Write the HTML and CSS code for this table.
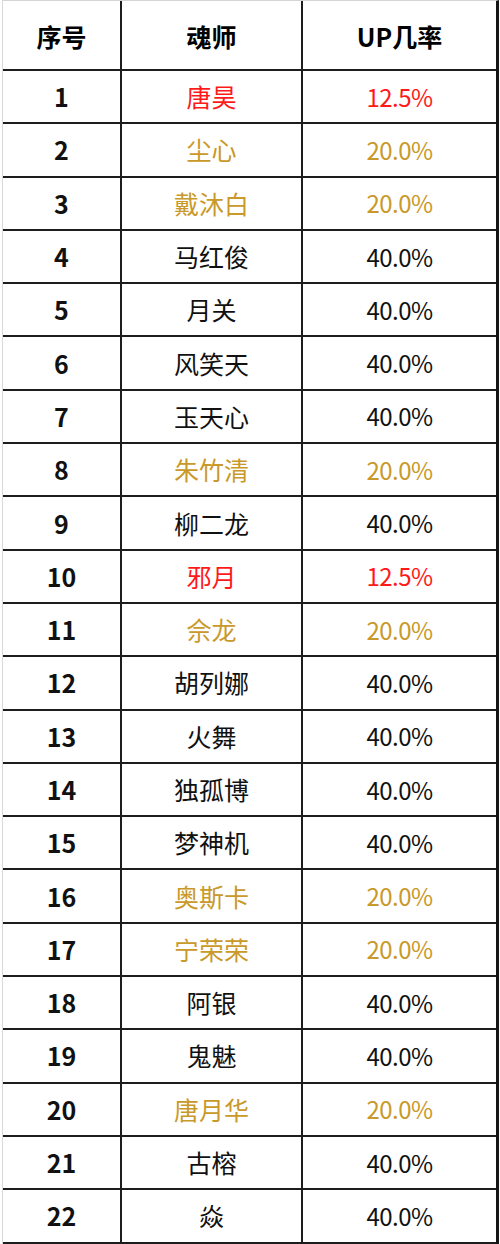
FILE: index.html
```html
<!DOCTYPE html>
<html lang="zh">
<head>
<meta charset="utf-8">
<link rel="stylesheet" href="styles.css">
</head>
<body>
<div class="sheet">
  <div class="row head"><div class="c c1">序号</div><div class="c c2">魂师</div><div class="c c3">UP几率</div></div>
  <div class="row red"><div class="c c1">1</div><div class="c c2">唐昊</div><div class="c c3">12.5%</div></div>
  <div class="row gold"><div class="c c1">2</div><div class="c c2">尘心</div><div class="c c3">20.0%</div></div>
  <div class="row gold"><div class="c c1">3</div><div class="c c2">戴沐白</div><div class="c c3">20.0%</div></div>
  <div class="row"><div class="c c1">4</div><div class="c c2">马红俊</div><div class="c c3">40.0%</div></div>
  <div class="row"><div class="c c1">5</div><div class="c c2">月关</div><div class="c c3">40.0%</div></div>
  <div class="row"><div class="c c1">6</div><div class="c c2">风笑天</div><div class="c c3">40.0%</div></div>
  <div class="row"><div class="c c1">7</div><div class="c c2">玉天心</div><div class="c c3">40.0%</div></div>
  <div class="row gold"><div class="c c1">8</div><div class="c c2">朱竹清</div><div class="c c3">20.0%</div></div>
  <div class="row"><div class="c c1">9</div><div class="c c2">柳二龙</div><div class="c c3">40.0%</div></div>
  <div class="row red"><div class="c c1">10</div><div class="c c2">邪月</div><div class="c c3">12.5%</div></div>
  <div class="row gold"><div class="c c1">11</div><div class="c c2">佘龙</div><div class="c c3">20.0%</div></div>
  <div class="row"><div class="c c1">12</div><div class="c c2">胡列娜</div><div class="c c3">40.0%</div></div>
  <div class="row"><div class="c c1">13</div><div class="c c2">火舞</div><div class="c c3">40.0%</div></div>
  <div class="row"><div class="c c1">14</div><div class="c c2">独孤博</div><div class="c c3">40.0%</div></div>
  <div class="row"><div class="c c1">15</div><div class="c c2">梦神机</div><div class="c c3">40.0%</div></div>
  <div class="row gold"><div class="c c1">16</div><div class="c c2">奥斯卡</div><div class="c c3">20.0%</div></div>
  <div class="row gold"><div class="c c1">17</div><div class="c c2">宁荣荣</div><div class="c c3">20.0%</div></div>
  <div class="row"><div class="c c1">18</div><div class="c c2">阿银</div><div class="c c3">40.0%</div></div>
  <div class="row"><div class="c c1">19</div><div class="c c2">鬼魅</div><div class="c c3">40.0%</div></div>
  <div class="row gold"><div class="c c1">20</div><div class="c c2">唐月华</div><div class="c c3">20.0%</div></div>
  <div class="row"><div class="c c1">21</div><div class="c c2">古榕</div><div class="c c3">40.0%</div></div>
  <div class="row"><div class="c c1">22</div><div class="c c2">焱</div><div class="c c3">40.0%</div></div>
</div>
</body>
</html>
```
FILE: styles.css
```css
html, body {
  margin: 0;
  padding: 0;
  background: #ffffff;
}
body {
  width: 500px;
  height: 1244px;
  overflow: hidden;
  font-family: "Noto Sans CJK SC", "Noto Sans", sans-serif;
  color: #111;
}
.sheet {
  margin-left: 2px;
  width: 497px;
  box-sizing: border-box;
  border-top: 1px solid #d4d4d4;
  border-left: 1px solid #d8d8d8;
  border-right: 3px solid #151515;
}
.row {
  display: grid;
  grid-template-columns: 117px 2px 179px 2px 193px;
  grid-template-columns: 119px 181px 193px;
  height: 53.3px;
  box-sizing: border-box;
  border-bottom: 2px solid #1d1d1d;
}
.row.head {
  height: 70px;
}
.c {
  display: flex;
  align-items: center;
  justify-content: center;
  font-size: 25px;
  line-height: 1;
}
.c1, .c2 {
  border-right: 2px solid #1d1d1d;
}
.c1 {
  font-weight: 700;
  font-size: 25px;
}
.c3 {
  font-size: 24px;
  letter-spacing: -0.5px;
}
.head .c {
  font-weight: 700;
  font-size: 25px;
  color: #000;
  letter-spacing: 0;
  padding-top: 2px;
}
.red .c2, .red .c3 {
  color: #ff1a1a;
}
.gold .c2, .gold .c3 {
  color: #c9992a;
}
```
